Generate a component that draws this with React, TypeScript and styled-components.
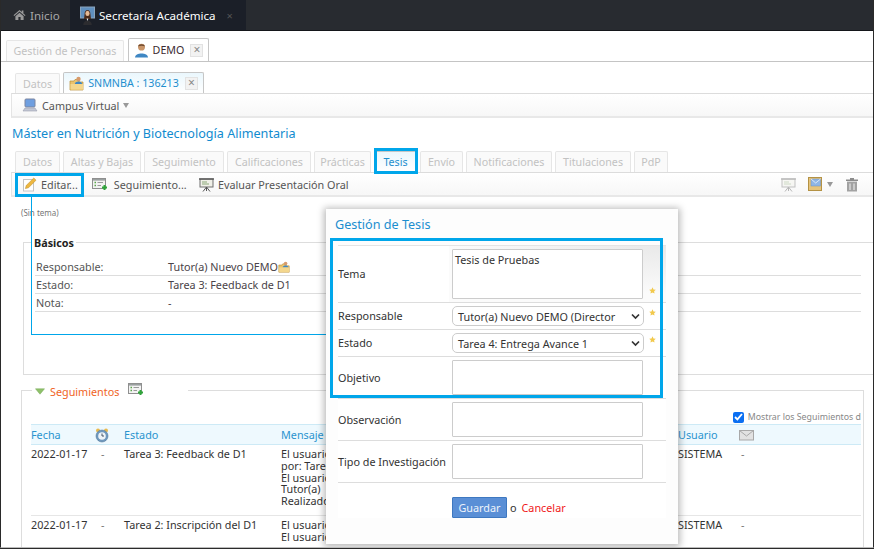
import React from "react";
import styled, { createGlobalStyle } from "styled-components";

const Global = createGlobalStyle`
  html, body { margin: 0; padding: 0; background: #2a2a2a; }
  * { box-sizing: border-box; }
`;

const Frame = styled.div`
  position: relative;
  width: 874px;
  height: 548px;
  overflow: hidden;
  background: #fff;
  border-left: 1px solid #2a2a2a;
  border-right: 1px solid #2a2a2a;
  border-bottom: 1px solid #bbb;
  font-family: "Noto Sans", "Open Sans", sans-serif;
  font-size: 10.8px;
  color: #444;
`;

const TopBar = styled.div`
  display: flex;
  height: 31px;
  background: #282b30;
  border-bottom: 1px solid #14161a;
`;
const TopTab = styled.div<{ $active?: boolean }>`
  display: flex;
  align-items: center;
  gap: 4px;
  height: 30px;
  font-size: 11.6px;
  white-space: nowrap;
  padding: ${(p) => (p.$active ? "0 0 0 10px" : "0 0 0 12px")};
  width: ${(p) => (p.$active ? "176px" : "69px")};
  background: ${(p) => (p.$active ? "#1b1f28" : "transparent")};
  color: ${(p) => (p.$active ? "#fff" : "#a8a8a8")};
`;
const CloseX = styled.span`
  color: #555;
  font-size: 11px;
  margin-left: 7px;
`;

const TabRow = styled.div<{ $left: number; $top: number; $h: number }>`
  display: flex;
  align-items: flex-end;
  gap: 3px;
  margin-top: ${(p) => p.$top}px;
  padding-left: ${(p) => p.$left}px;
  height: ${(p) => p.$h}px;
`;
const OuterLine = styled(TabRow)`
  border-bottom: 1px solid #c4c4c4;
  gap: 4px;
`;
const Tab = styled.div<{ $active?: boolean; $blue?: boolean; $h: number; $w: number }>`
  display: flex;
  align-items: center;
  justify-content: center;
  gap: 4px;
  width: ${(p) => p.$w}px;
  height: ${(p) => p.$h}px;
  border: 1px solid ${(p) => (p.$active ? "#c6c6c6" : "#e6e6e6")};
  border-bottom: none;
  border-radius: 2px 2px 0 0;
  background: ${(p) => (p.$blue ? "linear-gradient(#eaf7fd,#fff)" : p.$active ? "#fff" : "#fafafa")};
  color: ${(p) => (p.$blue ? "#1f8fce" : p.$active ? "#3a2a30" : "#c2c2c2")};
  font-size: 10.7px;
  white-space: nowrap;
`;
const SmallClose = styled.span`
  display: inline-flex;
  align-items: center;
  justify-content: center;
  width: 13px;
  height: 13px;
  margin-left: 2px;
  border: 1px solid #e2e2e2;
  background: #f2f2f2;
  color: #888;
  font-size: 12px;
  line-height: 1;
`;

const Toolbar = styled.div`
  display: flex;
  align-items: center;
  margin: 0 0 0 10px;
  height: 25px;
  padding-left: 10px;
  border-top: 1px solid #dcdcdc;
  border-left: 1px solid #e4e4e4;
  border-bottom: 2px solid #e8e8e8;
  background: linear-gradient(#fff, #f7f7f7);
  color: #555;
`;
const ToolItem = styled.span<{ $w: number }>`
  display: flex;
  align-items: center;
  gap: 4px;
  width: ${(p) => p.$w}px;
  white-space: nowrap;
`;
const ToolSpacer = styled.div`
  flex: 1;
`;
const ToolIcons = styled.div`
  display: flex;
  align-items: center;
  gap: 12px;
  padding-right: 14px;
`;
const MailGroup = styled.span`
  display: flex;
  align-items: center;
  gap: 5px;
`;
const Caret = styled.span`
  width: 0;
  height: 0;
  border-left: 3.5px solid transparent;
  border-right: 3.5px solid transparent;
  border-top: 5px solid #999;
`;

const Heading = styled.div`
  margin: 7px 0 0 11px;
  height: 18px;
  line-height: 18px;
  color: #118bcf;
  font-size: 12.6px;
`;
const NoTheme = styled.div`
  margin: 10px 0 0 20px;
  height: 12px;
  line-height: 12px;
  font-size: 8px;
  color: #777;
`;

const Basics = styled.div`
  position: relative;
  margin: 23px 0 0 22px;
  padding: 0 0 0 11px;
  height: 133px;
  border: 1px solid #ddd;
  border-right: none;
`;
const BasicsLegend = styled.div`
  position: absolute;
  top: -8px;
  left: 8px;
  padding: 0 2px;
  background: #fff;
  color: #222;
  font-weight: 700;
  line-height: 15px;
`;
const BasicRows = styled.div`
  padding-top: 15px;
`;
const BasicRow = styled.div`
  display: grid;
  grid-template-columns: 132px 1fr;
  height: 18px;
  line-height: 17px;
  padding-left: 1px;
  border-bottom: 1px solid #ddd;
  margin-right: 12px;
  color: #555;
`;
const BasicValue = styled.span`
  display: flex;
  align-items: center;
  color: #4a4348;
`;

const Tracking = styled.div`
  position: relative;
  margin: 15px 9px 0 20px;
  height: 160px;
  border: 1px solid #ddd;
  border-bottom: none;
  padding: 33px 2px 0 9px;
`;
const TrackLegend = styled.div`
  position: absolute;
  top: -10px;
  left: 10px;
  display: flex;
  align-items: center;
  height: 20px;
  padding: 0 0 0 3px;
  width: 156px;
  background: #fff;
  color: #f0641e;
  gap: 5px;
`;
const LegendIcon = styled.span`
  display: flex;
  margin: -4px 0 0 4px;
`;
const CheckLine = styled.label`
  position: absolute;
  top: 20px;
  right: 2px;
  display: flex;
  align-items: center;
  gap: 4px;
  font-size: 8.8px;
  color: #888;
  white-space: nowrap;
`;
const CheckBox = styled.span`
  display: inline-flex;
  align-items: center;
  justify-content: center;
  width: 11px;
  height: 11px;
  border-radius: 2px;
  background: #0b6ff2;
`;
const columns = "64px 29px 157px 397px 61px 1fr";
const HeadRow = styled.div`
  display: grid;
  grid-template-columns: ${columns};
  height: 21px;
  line-height: 20px;
  background: #eef9fe;
  border-top: 1px solid #cdeaf6;
  border-bottom: 1px solid #cdeaf6;
  color: #2a94cf;
`;
const HeadIcon = styled.span`
  display: flex;
  align-items: center;
`;
const DataRow = styled.div<{ $h: number }>`
  display: grid;
  grid-template-columns: ${columns};
  height: ${(p) => p.$h}px;
  padding-top: 3px;
  line-height: 11.8px;
  border-bottom: 1px solid #e6e6e6;
  color: #333;
  white-space: nowrap;
`;
const Dash = styled.span<{ $pad: number }>`
  padding-left: ${(p) => p.$pad}px;
  color: #777;
`;
const Mensaje = styled.span`
  display: flex;
  flex-direction: column;
`;

const Dialog = styled.div`
  position: absolute;
  left: 325px;
  top: 209px;
  width: 352px;
  height: 335px;
  padding: 7px 12px 0 12px;
  background: #fdfdfd;
  box-shadow: 0 1px 7px 2px rgba(0, 0, 0, 0.28);
`;
const DialogTitle = styled.div`
  height: 29px;
  line-height: 17px;
  margin-left: -3px;
  color: #1c8ecf;
  font-size: 12.6px;
`;
const Form = styled.div`
  background: #fff;
`;
const FormRow = styled.div<{ $h: number; $shade?: boolean }>`
  display: grid;
  grid-template-columns: 111px 3px 192px 1fr;
  height: ${(p) => p.$h}px;
  align-items: center;
  border-bottom: 1px solid #ddd;
  border-top: ${(p) => (p.$shade ? "1px solid #e4e4e4" : "none")};
  background: ${(p) =>
    p.$shade
      ? "radial-gradient(ellipse 220px 48px at 100% 0, #e9e9e9, #fbfbfb 100%) no-repeat right top / calc(100% - 111px) 100%"
      : "transparent"};
  color: #333;
`;
const RaisedLabel = styled.span`
  margin-top: -2px;
`;
const Gap = styled.span``;
const Area = styled.div<{ $h: number }>`
  height: ${(p) => p.$h}px;
  width: 191px;
  padding: 3px 2px;
  line-height: 14px;
  border: 1px solid #ccc;
  border-radius: 1px;
  background: #fff;
  color: #333;
`;
const FakeSelect = styled.div<{ $h: number }>`
  display: flex;
  align-items: center;
  justify-content: space-between;
  width: 192px;
  height: ${(p) => p.$h}px;
  padding: 0 3px 0 5px;
  border: 1px solid #ccc;
  border-radius: 5px;
  background: #fff;
  color: #333;
  white-space: nowrap;
`;
const StarCell = styled.span<{ $bottom?: boolean }>`
  display: flex;
  padding-left: 5px;
  align-self: ${(p) => (p.$bottom ? "end" : "start")};
  padding-top: ${(p) => (p.$bottom ? 0 : 6)}px;
  padding-bottom: ${(p) => (p.$bottom ? 8 : 0)}px;
`;
const Actions = styled.div`
  display: flex;
  align-items: center;
  gap: 3px;
  padding: 14px 0 0 114px;
  color: #333;
`;
const SaveButton = styled.button`
  width: 55px;
  height: 21px;
  padding: 0;
  border: 1px solid #3e78c0;
  border-radius: 1px;
  background: #5a8fd6;
  color: #eef4fb;
  font-family: inherit;
  font-size: 10.8px;
`;
const CancelLink = styled.span`
  color: #f01820;
  margin-left: 2px;
`;

const Mark = styled.div<{ $x: number; $y: number; $w: number; $h: number }>`
  position: absolute;
  left: ${(p) => p.$x}px;
  top: ${(p) => p.$y}px;
  width: ${(p) => p.$w}px;
  height: ${(p) => p.$h}px;
  border: 3px solid #00a6ea;
  pointer-events: none;
`;
const Connector = styled.div`
  position: absolute;
  left: 30px;
  top: 197px;
  width: 296px;
  height: 138px;
  border-left: 1px solid #00a6ea;
  border-bottom: 1px solid #00a6ea;
  pointer-events: none;
`;

const Home = () => (
  <svg width="13" height="12" viewBox="0 0 13 12">
    <path d="M6.5 1 0.5 6.2 1.3 7 6.5 2.6 11.7 7 12.5 6.2 10.4 4.4V1.5H8.8V3Z" fill="#9a9a9a" />
    <path d="M2.4 7.2 6.5 3.7 10.6 7.2V11H7.6V8H5.4V11H2.4Z" fill="#9a9a9a" />
  </svg>
);
const Teacher = () => (
  <svg width="15" height="19" viewBox="0 0 15 19">
    <rect x=".5" y="1" width="14" height="11" fill="#5f8fbf" stroke="#8aa4bd" />
    <path d="M4.6 8C4.4 2.8 10.6 2.8 10.4 8L11 13H4Z" fill="#4a2a1a" />
    <ellipse cx="7.5" cy="7.4" rx="2.1" ry="2.6" fill="#e5b994" />
    <path d="M3.2 19C3 13 12 13 11.8 19Z" fill="#2c2c30" />
    <path d="M6.6 12.5H8.4L7.5 15Z" fill="#eee" />
  </svg>
);
const Person = () => (
  <svg width="15" height="15" viewBox="0 0 15 15">
    <circle cx="7.5" cy="4.2" r="3.4" fill="#c99569" />
    <path d="M4 3.4C4.4.4 10.6.4 11 3.4 9 2.6 6 2.6 4 3.4Z" fill="#6e4a30" />
    <path d="M1 14.5C1 9 14 9 14 14.5Z" fill="#3f87c4" />
  </svg>
);
const FolderUser = ({ s = 15 }: { s?: number }) => (
  <svg width={s} height={s} viewBox="0 0 15 15">
    <path d="M1 5H5L6 3.5H10V6H14V14H1Z" fill="#eac36d" stroke="#b98d35" strokeWidth=".7" />
    <circle cx="9.5" cy="3" r="2.2" fill="#d79a6c" />
    <path d="M5.8 8C6.5 4.8 12.5 4.8 13.2 8Z" fill="#3f87c4" />
    <rect x="1.5" y="8" width="12.5" height="5.7" fill="#f4d78e" />
  </svg>
);
const Monitor = () => (
  <svg width="16" height="15" viewBox="0 0 16 15">
    <rect x="3" y="1" width="10" height="8" rx="1" fill="#6f9fe0" stroke="#7d86a0" />
    <path d="M1 13 3 10H13L15 13Z" fill="#c4c8d4" stroke="#9a9fb0" strokeWidth=".6" />
  </svg>
);
const Pencil = () => (
  <svg width="15" height="15" viewBox="0 0 15 15">
    <rect x="1.5" y="2.5" width="10" height="11.5" fill="#fff" stroke="#c4c4c4" />
    <path d="M11.8 1 14 3.2 6.5 10.8 3.4 11.6 4.2 8.5Z" fill="#eeb73f" stroke="#b98a26" strokeWidth=".5" />
  </svg>
);
const ListAdd = () => (
  <svg width="15" height="13" viewBox="0 0 15 13">
    <rect x=".5" y=".5" width="13" height="10" fill="#f3f3f3" stroke="#8f8f8f" />
    <rect x="1" y="1" width="12" height="1.6" fill="#9aa0a0" />
    <path d="M2.5 4.5H4M2.5 7.5H4" stroke="#58a848" strokeWidth="1.3" />
    <path d="M5.5 4.5H11M5.5 7.5H9" stroke="#9a9a9a" />
    <path d="M10 9.5H15M12.5 7V12" stroke="#2fa53a" strokeWidth="2" />
  </svg>
);
const Easel = ({ faded }: { faded?: boolean }) => (
  <svg width="15" height="15" viewBox="0 0 15 15" opacity={faded ? 0.4 : 1}>
    <rect x="1" y="2" width="13" height="8" fill="#f0f0e8" stroke="#6f6f6f" />
    <path d="M0 2H15" stroke="#555" strokeWidth="1.4" />
    <path d="M3 5H8M3 7H10" stroke="#8ba878" />
    <path d="M7.5 10V14M7.5 10 4 14.5M7.5 10 11 14.5" stroke="#555" />
  </svg>
);
const MailBook = () => (
  <svg width="14" height="14" viewBox="0 0 14 14">
    <rect x=".5" y=".5" width="13" height="13" fill="#e6c47b" stroke="#b49244" />
    <rect x="3" y="2" width="9.5" height="7" fill="#8fb6e6" stroke="#6d8fbf" strokeWidth=".5" />
    <path d="M3 2 7.7 6 12.5 2" fill="none" stroke="#eef4fb" strokeWidth=".8" />
  </svg>
);
const Trash = () => (
  <svg width="14" height="15" viewBox="0 0 14 15">
    <path d="M1 2.6H13V4H1ZM5 1H9V2.6H5Z" fill="#8c8c8c" />
    <path d="M2 4.6H12V14.5H2Z" fill="#a2a2a2" />
    <path d="M5 6.5V13M9 6.5V13" stroke="#dcdcdc" strokeWidth="1.4" />
  </svg>
);
const ArrowDown = () => (
  <svg width="10" height="7" viewBox="0 0 11 7">
    <path d="M.5.5H10.5L5.5 6.5Z" fill="#8fc16b" stroke="#6fa34d" strokeWidth=".5" />
  </svg>
);
const Clock = () => (
  <svg width="14" height="15" viewBox="0 0 14 15">
    <circle cx="3" cy="2.6" r="2" fill="#e8b94e" />
    <circle cx="11" cy="2.6" r="2" fill="#e8b94e" />
    <circle cx="7" cy="8" r="6" fill="#6f98bd" stroke="#557a9c" strokeWidth=".6" />
    <circle cx="7" cy="8" r="3.8" fill="#eef4f8" />
    <path d="M7 5.5V8H9" stroke="#456" fill="none" />
  </svg>
);
const Mail = () => (
  <svg width="15" height="11" viewBox="0 0 15 11">
    <rect x=".5" y=".5" width="14" height="9.5" fill="#e2e2e2" stroke="#a8a8a8" />
    <path d="M.5.5 7.5 6 14.5.5" fill="none" stroke="#a8a8a8" />
  </svg>
);
const Star = () => (
  <svg width="7" height="7" viewBox="0 0 10 10">
    <path d="M5 .4 6.4 3.4 9.7 3.8 7.3 6 7.9 9.4 5 7.7 2.1 9.4 2.7 6 .3 3.8 3.6 3.4Z" fill="#f2c94c" />
  </svg>
);
const Chevron = () => (
  <svg width="9" height="7" viewBox="0 0 9 7">
    <path d="M1 1.5 4.5 5 8 1.5" fill="none" stroke="#333" strokeWidth="1.7" />
  </svg>
);
const Tick = () => (
  <svg width="9" height="8" viewBox="0 0 9 8">
    <path d="M1 4 3.4 6.4 8 1" fill="none" stroke="#fff" strokeWidth="1.8" />
  </svg>
);

const sectionTabs: [string, number][] = [
  ["Datos", 45], ["Altas y Bajas", 78], ["Seguimiento", 80], ["Calificaciones", 84], ["Prácticas", 57],
];
const sectionTabsAfter: [string, number][] = [
  ["Envío", 43], ["Notificaciones", 86], ["Titulaciones", 76], ["PdP", 34],
];

export default function App() {
  return (
    <Frame>
      <Global />
      <TopBar>
        <TopTab><Home />Inicio</TopTab>
        <TopTab $active><Teacher />Secretaría Académica<CloseX>×</CloseX></TopTab>
      </TopBar>

      <OuterLine $left={5} $top={7} $h={24}>
        <Tab $w={118} $h={21}>Gestión de Personas</Tab>
        <Tab $w={81} $h={23} $active><Person />DEMO<SmallClose>×</SmallClose></Tab>
      </OuterLine>

      <TabRow $left={14} $top={9} $h={22}>
        <Tab $w={45} $h={20}>Datos</Tab>
        <Tab $w={141} $h={21} $active $blue><FolderUser />SNMNBA : 136213<SmallClose>×</SmallClose></Tab>
      </TabRow>
      <Toolbar>
        <ToolItem $w={120}><Monitor />Campus Virtual<Caret /></ToolItem>
      </Toolbar>

      <Heading>Máster en Nutrición y Biotecnología Alimentaria</Heading>

      <TabRow $left={14} $top={8} $h={21}>
        {sectionTabs.map(([t, w]) => <Tab key={t} $w={w} $h={21}>{t}</Tab>)}
        <Tab $w={43} $h={21} $active $blue>Tesis</Tab>
        {sectionTabsAfter.map(([t, w]) => <Tab key={t} $w={w} $h={21}>{t}</Tab>)}
      </TabRow>
      <Toolbar>
        <ToolItem $w={70}><Pencil />Editar...</ToolItem>
        <ToolItem $w={107}><ListAdd />&nbsp;Seguimiento...</ToolItem>
        <ToolItem $w={200}><Easel />Evaluar Presentación Oral</ToolItem>
        <ToolSpacer />
        <ToolIcons>
          <Easel faded />
          <MailGroup><MailBook /><Caret /></MailGroup>
          <Trash />
        </ToolIcons>
      </Toolbar>

      <NoTheme>(Sin tema)</NoTheme>

      <Basics>
        <BasicsLegend>Básicos</BasicsLegend>
        <BasicRows>
          <BasicRow><span>Responsable:</span><BasicValue>Tutor(a) Nuevo DEMO<FolderUser s={12} /></BasicValue></BasicRow>
          <BasicRow><span>Estado:</span><BasicValue>Tarea 3: Feedback de D1</BasicValue></BasicRow>
          <BasicRow><span>Nota:</span><BasicValue>-</BasicValue></BasicRow>
        </BasicRows>
      </Basics>

      <Tracking>
        <TrackLegend><ArrowDown />Seguimientos<LegendIcon><ListAdd /></LegendIcon></TrackLegend>
        <CheckLine><CheckBox><Tick /></CheckBox>Mostrar los Seguimientos d</CheckLine>
        <HeadRow>
          <span>Fecha</span><HeadIcon><Clock /></HeadIcon><span>Estado</span><span>Mensaje</span><span>Usuario</span><HeadIcon><Mail /></HeadIcon>
        </HeadRow>
        <DataRow $h={71}>
          <span>2022-01-17</span><Dash $pad={6}>-</Dash><span>Tarea 3: Feedback de D1</span>
          <Mensaje><span>El usuario</span><span>por: Tarea</span><span>El usuario</span><span>Tutor(a)</span><span>Realizado</span></Mensaje>
          <span>SISTEMA</span><Dash $pad={2}>-</Dash>
        </DataRow>
        <DataRow $h={40}>
          <span>2022-01-17</span><Dash $pad={6}>-</Dash><span>Tarea 2: Inscripción del D1</span>
          <Mensaje><span>El usuario</span><span>El usuario</span></Mensaje>
          <span>SISTEMA</span><Dash $pad={2}>-</Dash>
        </DataRow>
      </Tracking>

      <Connector />

      <Dialog>
        <DialogTitle>Gestión de Tesis</DialogTitle>
        <Form>
          <FormRow $h={58} $shade>
            <RaisedLabel>Tema</RaisedLabel><Gap />
            <Area $h={50}>Tesis de Pruebas</Area>
            <StarCell $bottom><Star /></StarCell>
          </FormRow>
          <FormRow $h={27}>
            <RaisedLabel>Responsable</RaisedLabel><Gap />
            <FakeSelect $h={20}>Tutor(a) Nuevo DEMO (Director<Chevron /></FakeSelect>
            <StarCell><Star /></StarCell>
          </FormRow>
          <FormRow $h={27}>
            <RaisedLabel>Estado</RaisedLabel><Gap />
            <FakeSelect $h={20}>Tarea 4: Entrega Avance 1<Chevron /></FakeSelect>
            <StarCell><Star /></StarCell>
          </FormRow>
          <FormRow $h={42}>
            <span>Objetivo</span><Gap /><Area $h={35} /><span />
          </FormRow>
          <FormRow $h={42}>
            <span>Observación</span><Gap /><Area $h={35} /><span />
          </FormRow>
          <FormRow $h={42}>
            <span>Tipo de Investigación</span><Gap /><Area $h={35} /><span />
          </FormRow>
          <Actions><SaveButton>Guardar</SaveButton>o<CancelLink>Cancelar</CancelLink></Actions>
        </Form>
      </Dialog>

      <Mark $x={14} $y={173} $w={69} $h={24} />
      <Mark $x={373} $y={148} $w={44} $h={26} />
      <Mark $x={329} $y={238} $w={333} $h={160} />
    </Frame>
  );
}
